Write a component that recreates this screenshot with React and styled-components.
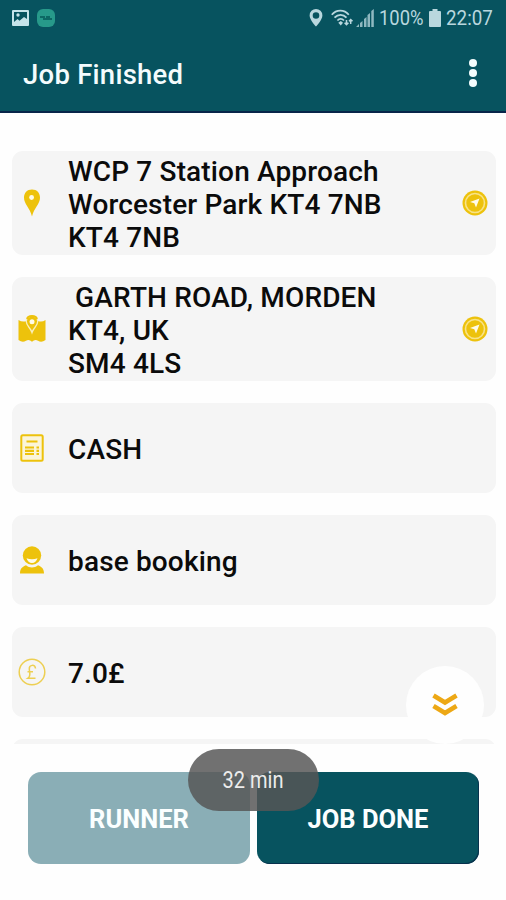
import React from "react";
import styled, { createGlobalStyle } from "styled-components";

const teal = "#07535f";
const gold = "#edc20c";

const GlobalStyle = createGlobalStyle`
  * { box-sizing: border-box; }
  body { margin: 0; background: #fefefe; font-family: Roboto, sans-serif; overflow: hidden; }
`;

const Screen = styled.div`
  position: relative;
  width: 506px;
  height: 900px;
  display: flex;
  flex-direction: column;
  background: #fefefe;
  overflow: hidden;
`;

const Header = styled.header`
  height: 113px;
  flex: none;
  background: ${teal};
  border-bottom: 2px solid #08254a;
`;

const StatusBar = styled.div`
  height: 36px;
  padding: 0 12px 0 12px;
  display: flex;
  align-items: center;
  color: #b9d7de;
  svg { display: block; flex: none; }
`;

const StatusGroup = styled.div`
  display: flex;
  align-items: center;
  gap: ${(p) => p.$gap}px;
  margin-left: ${(p) => (p.$end ? "auto" : 0)};
`;

const StatusText = styled.span`
  width: ${(p) => p.$width}px;
  font-size: 20px;
  line-height: 36px;
  white-space: nowrap;
  span {
    display: inline-block;
    transform: scaleX(${(p) => p.$scale});
    transform-origin: left;
  }
`;

const TitleBar = styled.div`
  height: 75px;
  padding: 1px 27px 0 23px;
  display: flex;
  align-items: center;
  justify-content: space-between;
`;

const Title = styled.h1`
  margin: 0;
  font-size: 27.5px;
  font-weight: 500;
  letter-spacing: 0.25px;
  color: #f4fcfd;
`;

const MenuButton = styled.button`
  border: 0;
  padding: 0;
  background: none;
  display: flex;
  flex-direction: column;
  align-items: center;
  gap: 2px;
  width: 12px;
  margin-top: -2px;
`;

const Dot = styled.i`
  width: 8px;
  height: 8px;
  border-radius: 50%;
  background: #f4fcfd;
`;

const List = styled.main`
  height: 631px;
  flex: none;
  padding: 38px 10px 0 12px;
  display: flex;
  flex-direction: column;
  gap: 22px;
  overflow: hidden;
`;

const Card = styled.section`
  height: ${(p) => (p.$tall ? 104 : 90)}px;
  flex: none;
  display: flex;
  align-items: center;
  padding-right: 8px;
  background: #f5f5f5;
  border-radius: 11px;
  svg { display: block; }
`;

const IconSlot = styled.div`
  width: 40px;
  display: flex;
  justify-content: center;
  margin-right: 16px;
`;

const CardText = styled.p`
  flex: 1;
  margin: 3px 0 0;
  font-size: 28px;
  font-weight: 500;
  line-height: 33px;
  letter-spacing: 0.15px;
  white-space: pre;
  color: #0b0b0b;
  span { display: block; }
`;

const Footer = styled.footer`
  flex: 1;
  display: flex;
  gap: 7px;
  padding: 28px 27px 0 28px;
`;

const ActionButton = styled.button`
  width: 222px;
  height: 92px;
  padding: 2px 0 0;
  border: 0;
  border-radius: 13px;
  background: ${(p) => (p.$muted ? "#8aaeb6" : teal)};
  box-shadow: ${(p) => (p.$muted ? "none" : "inset -1px -1px 0 #08314d")};
  color: #fbffff;
  font: 700 25.5px Roboto, sans-serif;
`;

const ScrollButton = styled.button`
  position: absolute;
  left: 406px;
  top: 666px;
  width: 78px;
  height: 78px;
  border: 0;
  border-radius: 50%;
  padding: 0;
  background: #fefefe;
  display: flex;
  align-items: center;
  justify-content: center;
`;

const Toast = styled.div`
  position: absolute;
  left: 188px;
  top: 749px;
  width: 131px;
  height: 62px;
  border-radius: 31px;
  background: rgba(86, 86, 86, 0.84);
  display: flex;
  align-items: center;
  justify-content: center;
  color: #ececec;
  font-size: 23px;
  span { transform: scaleX(0.87); white-space: nowrap; }
`;

const PhotoIcon = () => (
  <svg width="17" height="16" viewBox="0 0 17 16">
    <path fill="#c5e3ea" fillRule="evenodd" d="M1 0h15a1 1 0 0 1 1 1v14a1 1 0 0 1-1 1H1a1 1 0 0 1-1-1V1a1 1 0 0 1 1-1zM2 2v10l3.5-3 2 1.8L12 7l3 2V2z" />
    <circle cx="6" cy="5" r="1.7" fill="#c5e3ea" />
  </svg>
);

const AppBadgeIcon = () => (
  <svg width="18" height="18" viewBox="0 0 18 18">
    <rect width="18" height="18" rx="6" fill="#27998a" />
    <path d="M3 8h5M6 10h9M9 8h4" stroke="#0d6864" strokeWidth="1.8" />
  </svg>
);

const LocationIcon = () => (
  <svg width="14" height="18" viewBox="0 0 14 18">
    <path fill="currentColor" fillRule="evenodd" d="M7 0a6.4 6.4 0 0 0-6.4 6.4C.6 10.8 7 17.5 7 17.5s6.4-6.7 6.4-11.1A6.4 6.4 0 0 0 7 0zm0 3.2a3.300 3.300 0 1 1 0 6.600 3.300 3.300 0 0 1 0-6.600z" />
  </svg>
);

const WifiIcon = () => (
  <svg width="23" height="18" viewBox="0 0 23 18" fill="none" stroke="currentColor" strokeWidth="1.8">
    <path d="M.8 5.800c4.500-5.500 12.500-5.500 17 0M3.500 8.700c3.600-3.900 8.600-3.900 12 0M6.400 11.500c2-2.100 4.600-2.100 6.500 0" />
    <path d="M7.300 13.700L9.800 12l2.200 1.700-2.200 2.700z" fill="currentColor" stroke="none" />
    <path d="M15.500 11v4.500m-1.900-1.800 1.900 2 1.900-2M19.700 15v-4.500m-1.700 1.800 1.700-1.800 1.800 1.800" strokeWidth="1.500" />
  </svg>
);

const SignalIcon = () => (
  <svg width="18" height="18" viewBox="0 0 18 18" fill="#8fb8c0">
    <path d="M0 18l3-3v3zM4 14l2.500-2v6H4zM8 10l2.500-2v10H8zM11.500 6 14 4v14h-2.500zM15.300 2 17.800 0v18h-2.500z" />
  </svg>
);

const BatteryIcon = () => (
  <svg width="12" height="18" viewBox="0 0 12 18">
    <path d="M3.500 0h5v2H11q1 0 1 1v14q0 1-1 1H1q-1 0-1-1V3q0-1 1-1h2.500z" fill="currentColor" />
  </svg>
);

const PinIcon = () => (
  <svg width="18" height="28" viewBox="0 0 18 28">
    <path d="M9 .5C4 .5 1 4 1 8.800 1 15 7 19 9 27.500 11 19 17 15 17 8.800 17 4 14 .5 9 .5z" fill={gold} />
    <circle cx="8.600" cy="8.500" r="2.400" fill="#fffbe8" />
  </svg>
);

const MapIcon = () => (
  <svg width="28" height="28" viewBox="0 0 28 28">
    <path d="M.5 5q4 2.500 8 1l5.500 3 6-3q4 1.500 7.500-1v20q-4 3-7.500.7-3-2-6 1-3-3-6-1-3.500 2.300-7.500-.7z" fill={gold} />
    <path d="M14 1C10.500 1 8.300 3.300 8.300 6.600 8.300 11 12.500 12.500 14 17.500 15.500 12.500 19.700 11 19.700 6.600 19.700 3.300 17.500 1 14 1z" fill={gold} stroke="#f9efbd" strokeWidth="1.300" />
    <path d="M9 4C10 0 18 0 19 4" fill="none" stroke={gold} strokeWidth="1.800" />
    <circle cx="14" cy="6.700" r="2.500" fill="#fffbe8" />
  </svg>
);

const ReceiptIcon = () => (
  <svg width="24" height="28" viewBox="0 0 24 28" fill="none" stroke={gold}>
    <rect x="1.300" y="1.300" width="21.400" height="25.400" rx="1.500" strokeWidth="2" fill="#fbf5d9" />
    <path d="M6.500 7.500h11M5 13.500h9M5 16.800h9M5 20h9M16.500 13.500h2.500M16.500 16.800h2.500M16.500 20h2.500" strokeWidth="2.200" />
  </svg>
);

const PersonIcon = () => (
  <svg width="26" height="28" viewBox="0 0 26 28">
    <circle cx="13" cy="9.500" r="9.200" fill={gold} />
    <path d="M7.500 12.300q5.500 1.800 11 0-1.500 4.700-5.500 4.700t-5.500-4.700z" fill="#fffbe8" />
    <path d="M1 27.500c0-5 2.500-7 6-8.300 3.500 3 8.500 3 12 0 3.500 1.300 6 3.300 6 8.300z" fill={gold} />
  </svg>
);

const PoundIcon = () => (
  <svg width="28" height="28" viewBox="0 0 28 28" fill="none" stroke="#edcf52">
    <circle cx="14" cy="14" r="12.800" strokeWidth="1.500" />
    <path d="M17.500 10.500C17 6 11 6.500 11.300 11c.1 3 2 7-1.300 9.200h7.500M9.500 13.800h5.500" strokeWidth="1.500" />
  </svg>
);

const NavigateIcon = () => (
  <svg width="26" height="26" viewBox="0 0 26 26">
    <circle cx="13" cy="13" r="12.500" fill={gold} />
    <circle cx="13" cy="13" r="9.500" fill="none" stroke="#f8e388" strokeWidth="1.600" />
    <path d="M17.500 8.500 14 17.500l-1.700-4.300L8 12z" fill="#fffbe8" />
  </svg>
);

const ChevronsIcon = () => (
  <svg width="26" height="24" viewBox="0 0 26 24" fill="none" stroke="#eda815" strokeWidth="4.600">
    <path d="M1.500 2.500 13 9.500l11.500-7M1.500 13 13 20l11.500-7" />
  </svg>
);

const items = [
  { icon: <PinIcon />, lines: ["WCP 7 Station Approach", "Worcester Park KT4 7NB", "KT4 7NB"], tall: true },
  { icon: <MapIcon />, lines: [" GARTH ROAD, MORDEN", "KT4, UK", "SM4 4LS"], tall: true },
  { icon: <ReceiptIcon />, lines: ["CASH"] },
  { icon: <PersonIcon />, lines: ["base booking"] },
  { icon: <PoundIcon />, lines: ["7.0£"] },
];

export default function App() {
  return (
    <Screen>
      <GlobalStyle />
      <Header>
        <StatusBar>
          <StatusGroup $gap={8}>
            <PhotoIcon />
            <AppBadgeIcon />
          </StatusGroup>
          <StatusGroup $gap={5} $end>
            <StatusGroup $gap={8}>
              <LocationIcon />
              <StatusGroup $gap={2}>
                <WifiIcon />
                <SignalIcon />
              </StatusGroup>
            </StatusGroup>
            <StatusText $width={45} $scale={0.92}><span>100%</span></StatusText>
            <BatteryIcon />
            <StatusText $width={48} $scale={0.94}><span>22:07</span></StatusText>
          </StatusGroup>
        </StatusBar>
        <TitleBar>
          <Title>Job Finished</Title>
          <MenuButton aria-label="Menu"><Dot /><Dot /><Dot /></MenuButton>
        </TitleBar>
      </Header>
      <List>
        {items.map((item) => (
          <Card key={item.lines[0]} $tall={item.tall}>
            <IconSlot>{item.icon}</IconSlot>
            <CardText>{item.lines.map((line) => <span key={line}>{line}</span>)}</CardText>
            {item.tall && <NavigateIcon />}
          </Card>
        ))}
        <Card />
      </List>
      <Footer>
        <ActionButton $muted>RUNNER</ActionButton>
        <ActionButton>JOB DONE</ActionButton>
      </Footer>
      <ScrollButton aria-label="Scroll down"><ChevronsIcon /></ScrollButton>
      <Toast><span>32 min</span></Toast>
    </Screen>
  );
}
